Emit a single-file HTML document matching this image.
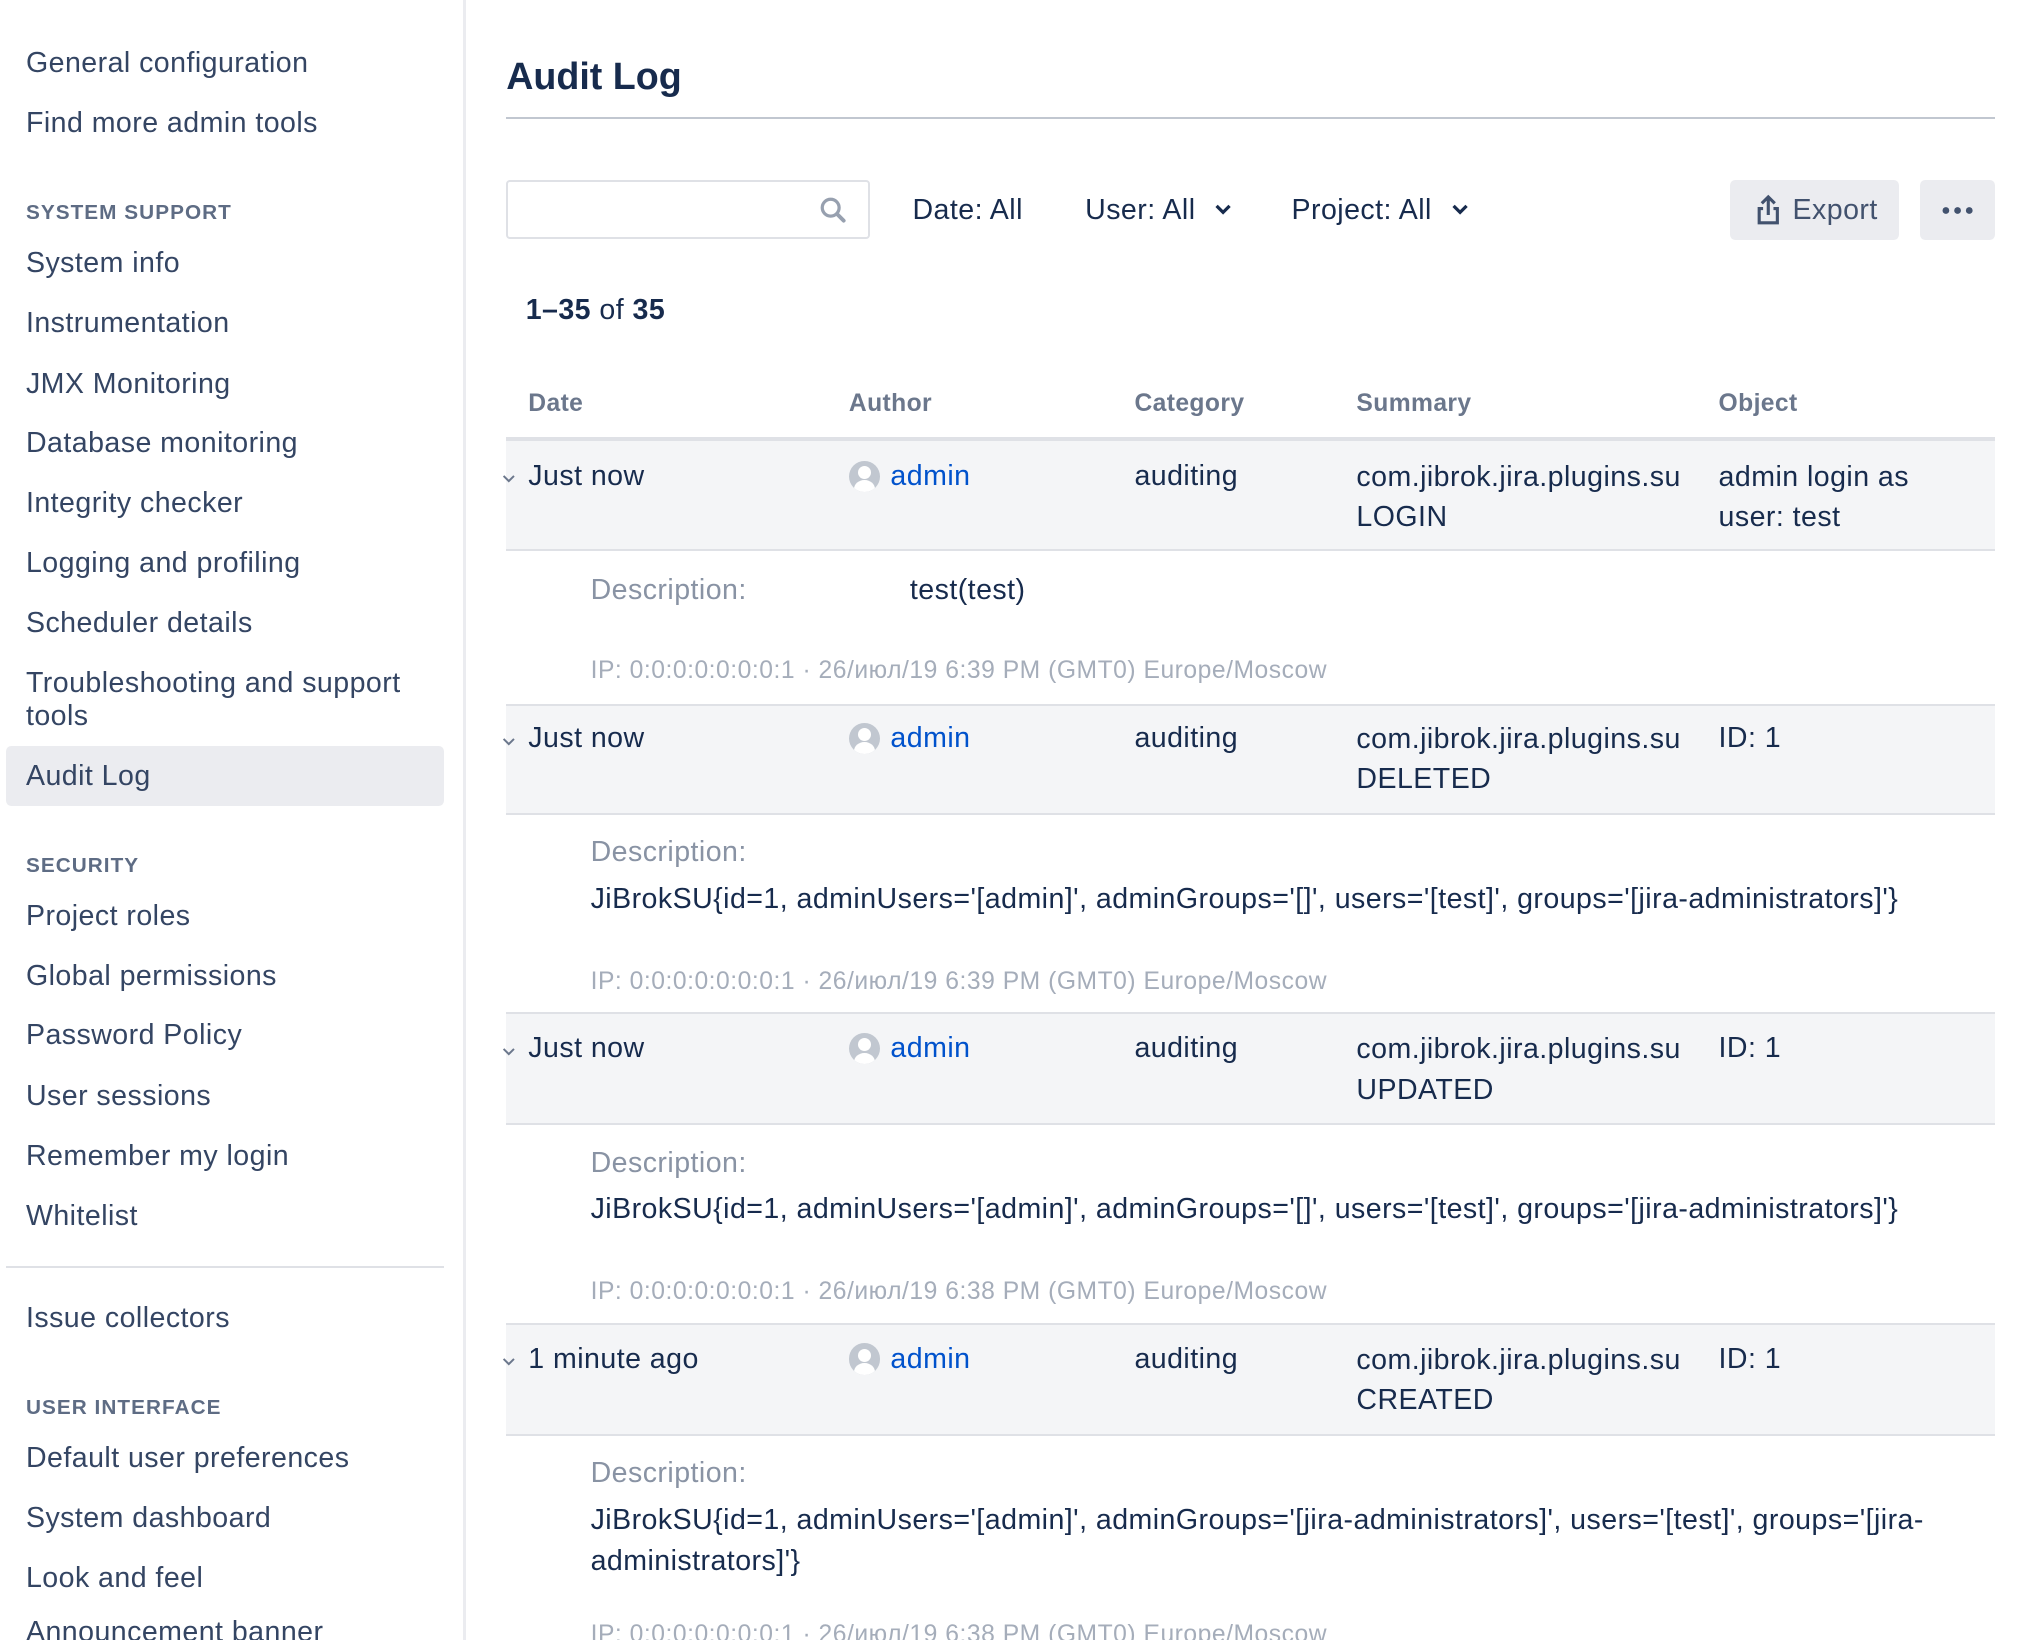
<!DOCTYPE html>
<html><head><meta charset="utf-8"><style>
html,body{margin:0;padding:0;background:#fff;overflow:hidden}
body{width:2034px;height:1640px}
#w{zoom:1.298;position:relative;width:1567px;height:1264px;font-family:"Liberation Sans",sans-serif;color:#172b4d;overflow:hidden}
.t{position:absolute;white-space:nowrap;line-height:30px;font-size:22px;letter-spacing:.35px}
.s{color:#344563}
.h{position:absolute;font-size:16px;font-weight:bold;color:#5e6c84;letter-spacing:.8px;line-height:20px}
.ch{position:absolute;font-size:19px;font-weight:bold;color:#6b778c;line-height:24px;letter-spacing:.3px}
.g{color:#8993a4}
.ip{position:absolute;font-size:19px;color:#a5adba;line-height:24px;white-space:nowrap;letter-spacing:.4px}
.row{position:absolute;left:390px;width:1147px;background:#f4f5f7;border-bottom:2px solid #dfe1e6}
.a{color:#0052cc}
.av{position:absolute;width:24px;height:24px;border-radius:50%;background:#c1c7d0;overflow:hidden}
.av:before{content:"";position:absolute;left:7px;top:4px;width:10px;height:10px;border-radius:50%;background:#fff}
.av:after{content:"";position:absolute;left:4px;top:15px;width:16px;height:14px;border-radius:50% 50% 0 0;background:#fff}
.cv{position:absolute}
</style></head><body><div id="w">
<div style="position:absolute;left:357px;top:0;width:2px;height:1264px;background:#ebecf0"></div>
<div class="t s" style="left:20px;top:34px">General configuration</div>
<div class="t s" style="left:20px;top:80px">Find more admin tools</div>
<div class="h" style="left:20px;top:154px">SYSTEM SUPPORT</div>
<div class="t s" style="left:20px;top:188px">System info</div>
<div class="t s" style="left:20px;top:234px">Instrumentation</div>
<div class="t s" style="left:20px;top:281px">JMX Monitoring</div>
<div class="t s" style="left:20px;top:327px">Database monitoring</div>
<div class="t s" style="left:20px;top:373px">Integrity checker</div>
<div class="t s" style="left:20px;top:419px">Logging and profiling</div>
<div class="t s" style="left:20px;top:465px">Scheduler details</div>
<div class="t s" style="left:20px;line-height:25px;top:514px">Troubleshooting and support<br>tools</div>
<div style="position:absolute;left:5px;top:575px;width:337px;height:46px;background:#ebecf0;border-radius:4px"></div>
<div class="t s" style="left:20px;top:583px">Audit Log</div>
<div class="h" style="left:20px;top:657px">SECURITY</div>
<div class="t s" style="left:20px;top:691px">Project roles</div>
<div class="t s" style="left:20px;top:737px">Global permissions</div>
<div class="t s" style="left:20px;top:783px">Password Policy</div>
<div class="t s" style="left:20px;top:830px">User sessions</div>
<div class="t s" style="left:20px;top:876px">Remember my login</div>
<div class="t s" style="left:20px;top:922px">Whitelist</div>
<div style="position:absolute;left:5px;top:975px;width:337px;height:2px;background:#dfe1e6"></div>
<div class="t s" style="left:20px;top:1001px">Issue collectors</div>
<div class="h" style="left:20px;top:1075px">USER INTERFACE</div>
<div class="t s" style="left:20px;top:1109px">Default user preferences</div>
<div class="t s" style="left:20px;top:1155px">System dashboard</div>
<div class="t s" style="left:20px;top:1201px">Look and feel</div>
<div class="t s" style="left:20px;top:1243px">Announcement banner</div>

<div class="t" style="left:390px;top:40px;font-size:29px;line-height:38px;font-weight:bold;letter-spacing:0">Audit Log</div>
<div style="position:absolute;left:390px;top:90px;width:1147px;height:2px;background:#c1c7d0"></div>
<div style="position:absolute;left:390px;top:139px;width:277px;height:42px;border:2px solid #dfe1e6;border-radius:3px"></div>
<svg style="position:absolute;left:631px;top:151px" width="22" height="22" viewBox="0 0 22 22"><circle cx="9" cy="9" r="6.5" fill="none" stroke="#97a0af" stroke-width="2.5"/><path d="M14 14l5 5" stroke="#97a0af" stroke-width="3" stroke-linecap="round"/></svg>
<div class="t" style="left:703px;top:147px">Date: All</div>
<div class="t" style="left:836px;top:147px">User: All</div>
<svg style="position:absolute;left:935px;top:156px" width="14" height="12"><path d="M2 3l5 5 5-5" fill="none" stroke="#172b4d" stroke-width="2.5"/></svg>
<div class="t" style="left:995px;top:147px">Project: All</div>
<svg style="position:absolute;left:1118px;top:156px" width="14" height="12"><path d="M2 3l5 5 5-5" fill="none" stroke="#172b4d" stroke-width="2.5"/></svg>
<div style="position:absolute;left:1333px;top:139px;width:130px;height:46px;background:#ebecf0;border-radius:4px"></div>
<svg style="position:absolute;left:1351px;top:149px" width="22" height="26" viewBox="0 0 22 26"><path d="M11 17V3M6 8l5-5 5 5M7 12H4v11h14V12h-3" fill="none" stroke="#42526e" stroke-width="2.4"/></svg>
<div class="t" style="left:1381px;top:147px;color:#42526e">Export</div>
<div style="position:absolute;left:1479px;top:139px;width:58px;height:46px;background:#ebecf0;border-radius:4px"></div>
<svg style="position:absolute;left:1496px;top:157px" width="24" height="10"><circle cx="3" cy="5" r="2.6" fill="#42526e"/><circle cx="12" cy="5" r="2.6" fill="#42526e"/><circle cx="21" cy="5" r="2.6" fill="#42526e"/></svg>

<div class="t" style="left:405px;top:224px"><b>1–35</b> of <b>35</b></div>
<div class="ch" style="left:407px;top:299px">Date</div>
<div class="ch" style="left:654px;top:299px">Author</div>
<div class="ch" style="left:874px;top:299px">Category</div>
<div class="ch" style="left:1045px;top:299px">Summary</div>
<div class="ch" style="left:1324px;top:299px">Object</div>
<div style="position:absolute;left:390px;top:337px;width:1147px;height:3px;background:#dfe1e6"></div>

<!-- row 1 -->
<div class="row" style="top:340px;height:83px"></div>
<svg class="cv" style="left:386px;top:364px" width="12" height="10"><path d="M2 3l4 4 4-4" fill="none" stroke="#6b778c" stroke-width="1.5"/></svg>
<div class="t" style="left:407px;top:352px">Just now</div>
<div class="av" style="left:654px;top:355px"></div>
<div class="t a" style="left:686px;top:352px">admin</div>
<div class="t" style="left:874px;top:352px">auditing</div>
<div class="t" style="left:1045px;top:352px;line-height:31px">com.jibrok.jira.plugins.su<br>LOGIN</div>
<div class="t" style="left:1324px;top:352px;line-height:31px">admin login as<br>user: test</div>
<div class="t g" style="left:455px;top:440px">Description:</div>
<div class="t" style="left:701px;top:440px">test(test)</div>
<div class="ip" style="left:455px;top:505px">IP: 0:0:0:0:0:0:0:1 · 26/июл/19 6:39 PM (GMT0) Europe/Moscow</div>

<!-- row 2 -->
<div class="row" style="top:542px;height:83px;border-top:2px solid #dfe1e6"></div>
<svg class="cv" style="left:386px;top:566px" width="12" height="10"><path d="M2 3l4 4 4-4" fill="none" stroke="#6b778c" stroke-width="1.5"/></svg>
<div class="t" style="left:407px;top:554px">Just now</div>
<div class="av" style="left:654px;top:557px"></div>
<div class="t a" style="left:686px;top:554px">admin</div>
<div class="t" style="left:874px;top:554px">auditing</div>
<div class="t" style="left:1045px;top:554px;line-height:31px">com.jibrok.jira.plugins.su<br>DELETED</div>
<div class="t" style="left:1324px;top:554px">ID: 1</div>
<div class="t g" style="left:455px;top:642px">Description:</div>
<div class="t" style="left:455px;top:678px">JiBrokSU{id=1, adminUsers='[admin]', adminGroups='[]', users='[test]', groups='[jira-administrators]'}</div>
<div class="ip" style="left:455px;top:744px">IP: 0:0:0:0:0:0:0:1 · 26/июл/19 6:39 PM (GMT0) Europe/Moscow</div>

<!-- row 3 -->
<div class="row" style="top:780px;height:84px;border-top:2px solid #dfe1e6"></div>
<svg class="cv" style="left:386px;top:805px" width="12" height="10"><path d="M2 3l4 4 4-4" fill="none" stroke="#6b778c" stroke-width="1.5"/></svg>
<div class="t" style="left:407px;top:793px">Just now</div>
<div class="av" style="left:654px;top:796px"></div>
<div class="t a" style="left:686px;top:793px">admin</div>
<div class="t" style="left:874px;top:793px">auditing</div>
<div class="t" style="left:1045px;top:793px;line-height:31px">com.jibrok.jira.plugins.su<br>UPDATED</div>
<div class="t" style="left:1324px;top:793px">ID: 1</div>
<div class="t g" style="left:455px;top:881px">Description:</div>
<div class="t" style="left:455px;top:917px">JiBrokSU{id=1, adminUsers='[admin]', adminGroups='[]', users='[test]', groups='[jira-administrators]'}</div>
<div class="ip" style="left:455px;top:983px">IP: 0:0:0:0:0:0:0:1 · 26/июл/19 6:38 PM (GMT0) Europe/Moscow</div>

<!-- row 4 -->
<div class="row" style="top:1019px;height:84px;border-top:2px solid #dfe1e6"></div>
<svg class="cv" style="left:386px;top:1044px" width="12" height="10"><path d="M2 3l4 4 4-4" fill="none" stroke="#6b778c" stroke-width="1.5"/></svg>
<div class="t" style="left:407px;top:1032px">1 minute ago</div>
<div class="av" style="left:654px;top:1035px"></div>
<div class="t a" style="left:686px;top:1032px">admin</div>
<div class="t" style="left:874px;top:1032px">auditing</div>
<div class="t" style="left:1045px;top:1032px;line-height:31px">com.jibrok.jira.plugins.su<br>CREATED</div>
<div class="t" style="left:1324px;top:1032px">ID: 1</div>
<div class="t g" style="left:455px;top:1120px">Description:</div>
<div class="t" style="left:455px;top:1156px;line-height:31px">JiBrokSU{id=1, adminUsers='[admin]', adminGroups='[jira-administrators]', users='[test]', groups='[jira-<br>administrators]'}</div>
<div class="ip" style="left:455px;top:1247px">IP: 0:0:0:0:0:0:0:1 · 26/июл/19 6:38 PM (GMT0) Europe/Moscow</div>
</div></body></html>
